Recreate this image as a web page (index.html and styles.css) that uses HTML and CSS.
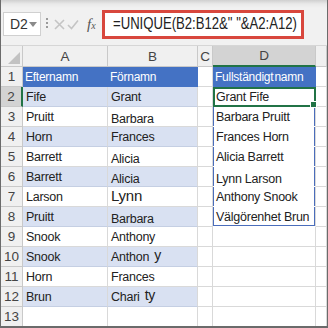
FILE: index.html
```html
<!DOCTYPE html>
<html lang="sv">
<head>
    <meta charset="UTF-8">
    <title>UNIQUE</title>
    <link rel="stylesheet" href="styles.css">
</head>
<body>
    <div class="frame">
        <div class="bar">
            <div class="namebox">D2
                <svg class="caret" width="8" height="5" viewBox="0 0 8 5"><path d="M0 0h8L4 5z" fill="#8a8a8a"/></svg>
            </div>
            <div class="grip"></div>
            <div class="tools">
                <svg width="11" height="11" viewBox="0 0 11 11"><path d="M1 1l9 9M10 1l-9 9" stroke="#c4c4c4" stroke-width="1.6"/></svg>
                <svg width="12" height="11" viewBox="0 0 12 11"><path d="M1 6l3.5 3.5L11 1.5" stroke="#c4c4c4" stroke-width="1.6" fill="none"/></svg>
                <span class="fx">f<span>x</span></span>
            </div>
            <div class="formula"><span>=UNIQUE(B2:B12&amp;" "&amp;A2:A12)</span></div>
        </div>

        <div class="sheet">
            <!-- column headers -->
            <div class="hd corner"><span class="tri"></span></div>
            <div class="hd">A</div>
            <div class="hd">B</div>
            <div class="hd">C</div>
            <div class="hd sel">D</div>
            <div class="hd"></div>

            <div class="rh">1</div>
            <div class="c top">Efternamn</div>
            <div class="c top">Förnamn</div>
            <div class="c"></div>
            <div class="c top">Fullständigt namn</div>
            <div class="c"></div>

            <div class="rh sel">2</div>
            <div class="c band">Fife</div>
            <div class="c band">Grant</div>
            <div class="c"></div>
            <div class="c spill active">Grant Fife</div>
            <div class="c"></div>

            <div class="rh">3</div>
            <div class="c">Pruitt</div>
            <div class="c low">Barbara</div>
            <div class="c"></div>
            <div class="c spill">Barbara Pruitt</div>
            <div class="c"></div>

            <div class="rh">4</div>
            <div class="c band">Horn</div>
            <div class="c band">Frances</div>
            <div class="c"></div>
            <div class="c spill">Frances Horn</div>
            <div class="c"></div>

            <div class="rh">5</div>
            <div class="c">Barrett</div>
            <div class="c low">Alicia</div>
            <div class="c"></div>
            <div class="c spill">Alicia Barrett</div>
            <div class="c"></div>

            <div class="rh">6</div>
            <div class="c band">Barrett</div>
            <div class="c band low">Alicia</div>
            <div class="c"></div>
            <div class="c spill low">Lynn Larson</div>
            <div class="c"></div>

            <div class="rh">7</div>
            <div class="c">Larson</div>
            <div class="c big">Lynn</div>
            <div class="c"></div>
            <div class="c spill">Anthony Snook</div>
            <div class="c"></div>

            <div class="rh">8</div>
            <div class="c band">Pruitt</div>
            <div class="c band low">Barbara</div>
            <div class="c"></div>
            <div class="c spill spill-end">Välgörenhet Brun</div>
            <div class="c"></div>

            <div class="rh">9</div>
            <div class="c">Snook</div>
            <div class="c">Anthony</div>
            <div class="c"></div>
            <div class="c"></div>
            <div class="c"></div>

            <div class="rh">10</div>
            <div class="c band">Snook</div>
            <div class="c band">Anthon<span class="up">y</span></div>
            <div class="c"></div>
            <div class="c"></div>
            <div class="c"></div>

            <div class="rh">11</div>
            <div class="c">Horn</div>
            <div class="c">Frances</div>
            <div class="c"></div>
            <div class="c"></div>
            <div class="c"></div>

            <div class="rh">12</div>
            <div class="c band">Brun</div>
            <div class="c band">Chari<span class="up">ty</span></div>
            <div class="c"></div>
            <div class="c"></div>
            <div class="c"></div>

            <div class="rh">13</div>
            <div class="c"></div>
            <div class="c"></div>
            <div class="c"></div>
            <div class="c"></div>
            <div class="c"></div>
        </div>
    </div>
</body>
</html>
```

FILE: styles.css
```css
body {
    margin: 0;
    font-family: "Liberation Sans", Arial, sans-serif;
}

.frame {
    width: 328px;
    height: 328px;
    box-sizing: border-box;
    border: 1px solid #6b6b6b;
    border-top: none;
    border-bottom-width: 2px;
    overflow: hidden;
    background: #fff;
}

/* formula bar */
.bar {
    height: 46px;
    display: flex;
    align-items: center;
    background: linear-gradient(#cfcfcf 0, #e9e9e9 4px, #f1f1f1 8px);
    border-bottom: 1px solid #d6d6d6;
    box-sizing: border-box;
    padding: 3px 0 0 2px;
}

.namebox {
    width: 38px;
    height: 24px;
    box-sizing: border-box;
    background: #fff;
    border: 1px solid #d0d0d0;
    display: flex;
    align-items: center;
    justify-content: space-between;
    padding: 0 3px 0 6px;
    font-size: 14px;
    color: #333;
}

.grip {
    width: 2px;
    height: 12px;
    margin: 0 6px 0 5px;
    background: repeating-linear-gradient(#9a9a9a 0 2px, transparent 2px 4px);
}

.tools {
    width: 48px;
    display: flex;
    align-items: center;
    gap: 2px;
}

.fx {
    font-family: "Liberation Serif", serif;
    font-style: italic;
    font-size: 15px;
    color: #555;
    margin-left: 6px;
}

.fx span {
    font-size: 10px;
}

.formula {
    width: 202px;
    height: 29px;
    box-sizing: border-box;
    border: 3px solid #d8473d;
    background: #fff;
    display: flex;
    align-items: center;
    padding-left: 8px;
    font-size: 16px;
    color: #222;
    white-space: nowrap;
    overflow: hidden;
}

.formula span {
    display: inline-block;
    transform: scaleX(.82);
    transform-origin: left center;
}

/* grid */
.sheet {
    display: grid;
    grid-template-columns: 22px 85px 90px 15px 103px 1fr;
    grid-template-rows: 21px repeat(13, 20px);
}

.hd,
.rh {
    background: #f0f0f0;
    color: #444;
    font-size: 13.5px;
    display: flex;
    align-items: center;
    justify-content: center;
    box-sizing: border-box;
    border-right: 1px solid #c9c9c9;
    border-bottom: 1px solid #c9c9c9;
}

.hd.sel {
    background: #d3d3d3;
    border-bottom: 2px solid #217346;
}

.rh.sel {
    background: #d3d3d3;
    border-right: 2px solid #217346;
}

.corner {
    position: relative;
}

.tri {
    position: absolute;
    right: 2px;
    bottom: 2px;
    border-left: 12px solid transparent;
    border-bottom: 12px solid #c2c2c2;
}

.c {
    font-size: 12.5px;
    letter-spacing: -0.25px;
    color: #222;
    box-sizing: border-box;
    border-right: 1px solid #d9d9d9;
    border-bottom: 1px solid #d9d9d9;
    padding: 0 0 2px 3px;
    display: flex;
    align-items: flex-end;
    white-space: nowrap;
}

.c.top {
    background: #4472c4;
    color: #fff;
    border-color: #4472c4;
    padding-left: 2px;
    font-size: 12px;
    word-spacing: -2px;
}

.c.band {
    background: #d9e1f2;
    border-bottom-color: #c5cfe3;
}

.c.low {
    padding-bottom: 0;
}

.c.big {
    font-size: 15px;
}

.up {
    position: relative;
    top: -2px;
    margin-left: 5px;
    font-size: 14px;
    line-height: 1;
}

.c.spill {
    box-shadow: inset 1px 0 #4a6dbb, inset -1px 0 #4a6dbb;
    border-bottom-color: #fff;
}

.c.spill-end {
    box-shadow: inset 1px 0 #4a6dbb, inset -1px 0 #4a6dbb, inset 0 -1px #4a6dbb;
}

.c.active {
    position: relative;
    outline: 2px solid #217346;
    outline-offset: -2px;
    box-shadow: none;
}

.c.active::after {
    content: "";
    position: absolute;
    right: -2px;
    bottom: -2px;
    width: 5px;
    height: 5px;
    background: #217346;
    border: 1px solid #fff;
}
```
